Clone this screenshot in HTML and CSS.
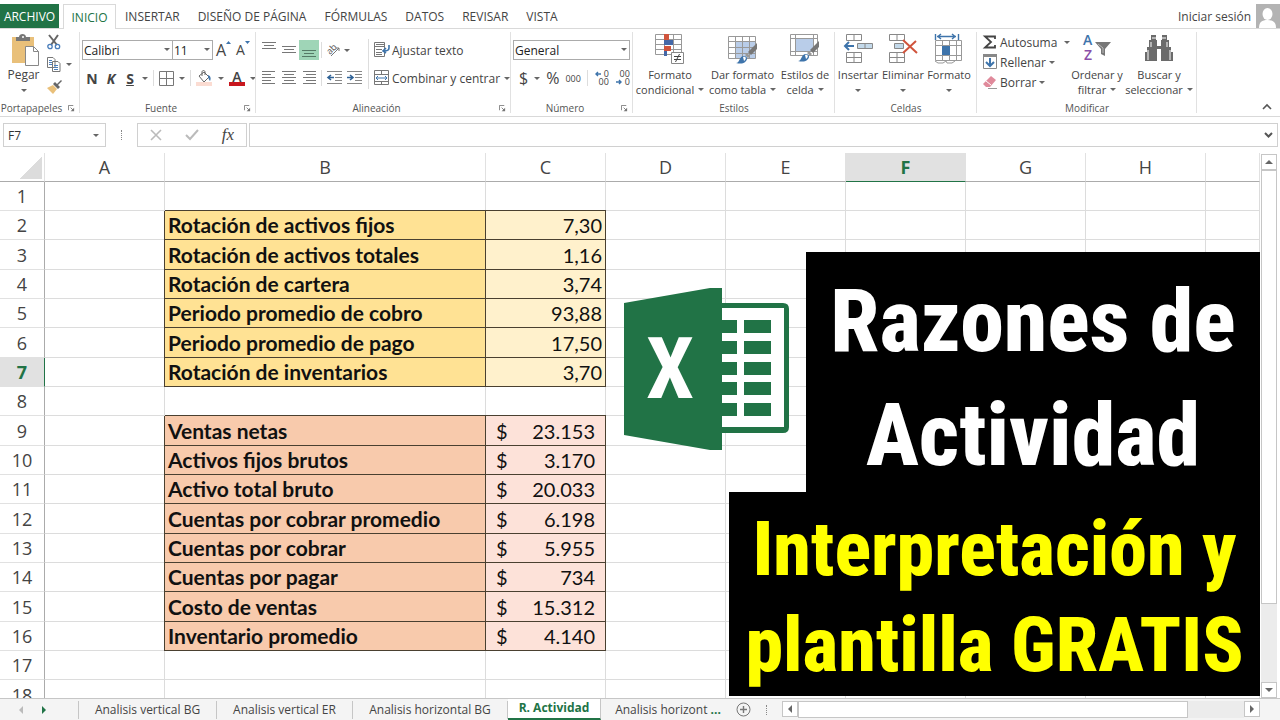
FILE: index.html
```html
<!DOCTYPE html>
<html lang="es">
<head>
    <meta charset="UTF-8">
    <meta name="viewport" content="width=device-width, initial-scale=1.0">
    <title>Razones de Actividad</title>
    <link rel="stylesheet" href="styles.css">
</head>
<body>
    <svg class="defs" aria-hidden="true">
        <symbol id="launcher" viewBox="0 0 8 8">
            <path d="M.5 6V.5H6M3 3l3 3" fill="none" stroke="#777"/>
            <path d="M7 3v4H3z" fill="#777"/>
        </symbol>
        <symbol id="brush" viewBox="0 0 22 22">
            <path d="M21 0v6l-6 6-3-3z" fill="#777"/>
            <path d="M11 10l3 3-2 2-3-3z" fill="#999"/>
            <path d="M0 20c4 0 3-7 8-7 3 0 4 3 2 5-2 3-6 3-10 2z" fill="#3e74ab"/>
            <path d="M7 14c3-1 4 2 1 4z" fill="#fff"/>
        </symbol>
    </svg>

    <div class="app">
        <!-- Pestañas -->
        <header class="tabs">
            <button class="tab file">ARCHIVO</button>
            <button class="tab active">INICIO</button>
            <button class="tab">INSERTAR</button>
            <button class="tab">DISEÑO DE PÁGINA</button>
            <button class="tab">FÓRMULAS</button>
            <button class="tab">DATOS</button>
            <button class="tab">REVISAR</button>
            <button class="tab">VISTA</button>
            <a class="login" href="#">Iniciar sesión
                <svg width="24" height="24" viewBox="0 0 24 24"><path d="M0 0h24v24H0z" fill="#b3b3b3"/><ellipse cx="11.5" cy="10" rx="5" ry="6" fill="#fff"/><path d="M3 24c0-6 3-8 8.500-8s8.500 2 8.500 8z" fill="#fff"/></svg>
            </a>
        </header>

        <!-- Cinta de opciones -->
        <div class="ribbon">
            <section class="group clipboard">
                <div class="group-body">
                    <button class="big paste">
                        <svg width="30" height="32" viewBox="0 0 30 32"><path d="M3 3h22v26H3z" fill="#e9c07a"/><path d="M7 7V3h3c0-4 7-4 7 0h4v4z" fill="#777"/><circle cx="14" cy="3" r="1" fill="#fff"/><path d="M16.500 12.500h8l5 5v14h-13z" fill="#fff" stroke="#888"/><path d="M24.500 12.500v5h5" fill="none" stroke="#888"/></svg>
                        <span>Pegar</span><i class="caret"></i>
                    </button>
                    <div class="small-col">
                        <button class="icon-btn" aria-label="Cortar"><svg width="14" height="15" viewBox="0 0 14 15"><path d="M2 0l8 10M11 0L4 10" stroke="#666" stroke-width="2" fill="none"/><circle cx="3" cy="11.500" r="2.200" fill="none" stroke="#4a7ebb" stroke-width="1.300"/><circle cx="10.500" cy="11.500" r="2.200" fill="none" stroke="#4a7ebb" stroke-width="1.300"/></svg></button>
                        <button class="icon-btn" aria-label="Copiar"><svg width="14" height="15" viewBox="0 0 14 15"><path d="M.5.5H6l2 2v8H.500zM5.500 4.500H11l2 2v8H5.500z" fill="#fff" stroke="#777"/><path d="M2 3.500h3M2 5.500h3M2 7.500h3M7 8.500h4M7 10.500h4M7 12.500h4" stroke="#4a7ebb"/></svg><i class="caret"></i></button>
                        <button class="icon-btn" aria-label="Copiar formato"><svg width="15" height="14" viewBox="0 0 15 14"><path d="M0 8l6-3 4 4-4 5z" fill="#e9c07a"/><path d="M6 4l2-2 2 2 4-4 1 1-4 4 2 2-2 2z" fill="#666"/></svg></button>
                    </div>
                </div>
                <h2>Portapapeles</h2>
                <svg class="launcher"><use href="#launcher"/></svg>
            </section>

            <section class="group font">
                <div class="group-body rows">
                    <div class="row">
                        <span class="drop family"><select aria-label="Fuente"><option>Calibri</option></select></span><span class="drop size"><select aria-label="Tamaño"><option>11</option></select></span>
                        <button class="grow" aria-label="Aumentar"><b>A</b><svg width="5" height="3"><path d="M0 3l2.500-3L5 3z" fill="#3e74ab"/></svg></button>
                        <button class="grow less" aria-label="Disminuir"><b>A</b><svg width="5" height="3"><path d="M0 0h5L2.500 3z" fill="#3e74ab"/></svg></button>
                    </div>
                    <div class="row format">
                        <button class="letter">N</button>
                        <button class="letter italic">K</button>
                        <button class="letter under">S</button>
                        <i class="caret"></i><i class="bar"></i>
                        <button class="pic" aria-label="Bordes"><svg width="15" height="15" viewBox="0 0 15 15"><path d="M.5.5h14v14H.500zM7.500 1v13M1 7.500h13" fill="none" stroke="#777"/></svg></button>
                        <i class="caret"></i><i class="bar"></i>
                        <button class="pic" aria-label="Relleno"><svg width="17" height="16" viewBox="0 0 17 16"><path d="M3 6l5-4 5 5-5 5z" fill="#fff" stroke="#666"/><path d="M6 6V2c0-2 3-2 3 0v3" fill="none" stroke="#666"/><path d="M12 5c3 1 3 4 2 6-1-1-2-3-2-6z" fill="#3e74ab"/><path d="M0 12h16v4H0z" fill="#fbdcd2"/></svg></button>
                        <i class="caret"></i>
                        <button class="font-color">A</button>
                        <i class="caret"></i>
                    </div>
                </div>
                <h2>Fuente</h2>
                <svg class="launcher"><use href="#launcher"/></svg>
            </section>

            <section class="group align">
                <div class="group-body">
                    <div class="rows align-icons">
                        <div class="row">
                            <button class="al" aria-label="Arriba"><svg width="14" height="18" viewBox="0 0 14 18"><path d="M0 1.500h14M2 4.500h10M0 7.500h14" stroke="#777"/></svg></button>
                            <button class="al" aria-label="Medio"><svg width="14" height="18" viewBox="0 0 14 18"><path d="M0 5.500h14M2 8.500h10M0 11.500h14" stroke="#777"/></svg></button>
                            <button class="al on" aria-label="Abajo"><svg width="14" height="18" viewBox="0 0 14 18"><path d="M0 9.500h14M2 12.500h10M0 15.500h14" stroke="#557a66"/></svg></button>
                            <i class="bar"></i>
                            <button class="al" aria-label="Orientación"><svg width="14" height="14" viewBox="0 0 14 14"><text x="0" y="9" transform="rotate(-45 5 7)" class="ab">ab</text><path d="M4 13l8-8M9 5h3v3" fill="none" stroke="#777"/></svg></button>
                            <i class="caret"></i>
                        </div>
                        <div class="row">
                            <button class="al" aria-label="Izquierda"><svg width="14" height="16" viewBox="0 0 14 16"><path d="M0 1.500h13M0 4.500h9M0 7.500h13M0 10.500h9M0 13.500h13" stroke="#777"/></svg></button>
                            <button class="al" aria-label="Centro"><svg width="14" height="16" viewBox="0 0 14 16"><path d="M0 1.500h14M2 4.500h10M0 7.500h14M2 10.500h10M0 13.500h14" stroke="#777"/></svg></button>
                            <button class="al" aria-label="Derecha"><svg width="14" height="16" viewBox="0 0 14 16"><path d="M1 1.500h13M4 4.500h10M1 7.500h13M4 10.500h10M1 13.500h13" stroke="#777"/></svg></button>
                            <i class="bar"></i>
                            <button class="al" aria-label="Disminuir sangría"><svg width="15" height="16" viewBox="0 0 15 16"><path d="M0 1.500h15M8 4.500h7M8 7.500h7M8 10.500h7M0 13.500h15" stroke="#888"/><path d="M7 7.500H1M4 5L1 7.500 4 10" fill="none" stroke="#2f6296" stroke-width="1.600"/></svg></button>
                            <button class="al" aria-label="Aumentar sangría"><svg width="15" height="16" viewBox="0 0 15 16"><path d="M0 1.500h15M8 4.500h7M8 7.500h7M8 10.500h7M0 13.500h15" stroke="#888"/><path d="M0 7.500h6M3 5l3 2.500L3 10" fill="none" stroke="#2f6296" stroke-width="1.600"/></svg></button>
                        </div>
                    </div>
                    <i class="bar tall"></i>
                    <div class="rows wraps">
                        <button class="row"><svg width="16" height="16" viewBox="0 0 16 16"><path d="M.5.5h10v14H.500zM0 4.500h11M2 7.500h6M2 10.500h6M2 12.500h6M2 2.500h9" fill="none" stroke="#777"/><path d="M15 3v3c0 2-2 3-5 3M12 6L9 9l3 2" fill="none" stroke="#3e74ab" stroke-width="1.600"/></svg>Ajustar texto</button>
                        <button class="row"><svg width="16" height="16" viewBox="0 0 16 16"><path d="M.5.5h14v14H.500zM0 4.500h15M0 11.500h15M7.500 0v4M7.500 12v3" fill="none" stroke="#777"/><path d="M2 8h11M4 6L2 8l2 2M11 6l2 2-2 2" fill="none" stroke="#3e74ab"/></svg>Combinar y centrar<i class="caret"></i></button>
                    </div>
                </div>
                <h2>Alineación</h2>
                <svg class="launcher"><use href="#launcher"/></svg>
            </section>

            <section class="group number">
                <div class="group-body rows">
                    <div class="row"><span class="drop general"><select aria-label="Formato de número"><option>General</option></select></span></div>
                    <div class="row symbols">
                        <button class="symbol">$</button><i class="caret"></i>
                        <button class="symbol">%</button>
                        <button class="zeros">000</button>
                        <i class="bar"></i>
                        <button class="decimals" aria-label="Aumentar decimales"><span><svg width="6" height="6" viewBox="0 0 6 6"><path d="M6 3H1M3 1L1 3l2 2" fill="none" stroke="#3e74ab" stroke-width="1.400"/></svg> 0</span><span>00</span></button>
                        <button class="decimals" aria-label="Disminuir decimales"><span>00</span><span><svg width="6" height="6" viewBox="0 0 6 6"><path d="M0 3h5M3 1l2 2-2 2" fill="none" stroke="#3e74ab" stroke-width="1.400"/></svg> 0</span></button>
                    </div>
                </div>
                <h2>Número</h2>
                <svg class="launcher"><use href="#launcher"/></svg>
            </section>

            <section class="group styles">
                <div class="group-body">
                    <button class="big conditional">
                        <svg width="30" height="32" viewBox="0 0 30 32"><path d="M.5.500h26v20H.500zM0 5.500h27M0 10.500h27M0 15.500h27M9.500 0v21M18.500 0v21" fill="#fff" stroke="#999"/><path d="M9 0h5v6H9zM9 12h7v5H9z" fill="#d0543c"/><path d="M9 6h9v5H9zM9 17h3v5H9z" fill="#4468a8"/><path d="M16.500 18.500h12v11h-12z" fill="#fff" stroke="#888"/><path d="M19 22.500h7M19 25.500h7M24.500 20l-4 8" stroke="#444"/></svg>
                        <span>Formato</span><span>condicional<i class="caret"></i></span>
                    </button>
                    <button class="big table-style">
                        <svg width="30" height="32" viewBox="0 0 30 32"><path d="M.5 2.500h27v22H.500z" fill="#fff"/><path d="M7 8h20v16H7z" fill="#b9cde9"/><path d="M.5 2.500h27v22H.500zM0 7.500h27M0 13.500h27M0 19.500h27M7.500 2v22M14.500 2v22M21.500 2v22" fill="none" stroke="#999"/><use href="#brush" x="8" y="9" width="22" height="22"/></svg>
                        <span>Dar formato</span><span>como tabla<i class="caret"></i></span>
                    </button>
                    <button class="big cell-style">
                        <svg width="30" height="32" viewBox="0 0 30 32"><path d="M.5.500h27v21H.500z" fill="#fff"/><path d="M5 5h18v12H5z" fill="#b9cde9"/><path d="M.5.500h27v21H.500zM0 4.500h27M0 17.500h27M5.500 0v21M23.500 0v21" fill="none" stroke="#999"/><use href="#brush" x="8" y="7" width="22" height="22"/></svg>
                        <span>Estilos de</span><span>celda<i class="caret"></i></span>
                    </button>
                </div>
                <h2>Estilos</h2>
            </section>

            <section class="group cells">
                <div class="group-body">
                    <button class="big insert">
                        <svg width="30" height="32" viewBox="0 0 30 32"><path d="M3.500.500h15v6h-15zM11 0v6M3.500 18.500h15v10h-15zM3 23.500h15M11 18v10" fill="#fff" stroke="#888"/><path d="M14.500 9.500h15v5h-15zM22 9v6" fill="#c3d9ea" stroke="#888"/><path d="M11 12H2M6 8l-4 4 4 4" fill="none" stroke="#3e74ab" stroke-width="2"/></svg>
                        <span>Insertar</span><i class="caret"></i>
                    </button>
                    <button class="big delete">
                        <svg width="30" height="32" viewBox="0 0 30 32"><path d="M1.500.500h15v6h-15zM9 0v6M1.500 18.500h15v10h-15zM1 23.500h15M9 18v10" fill="#fff" stroke="#888"/><path d="M6.500 9.500h9v5h-9z" fill="#c3d9ea" stroke="#888"/><path d="M15 6l14 13M28 7L15 19" stroke="#d0543c" stroke-width="2"/></svg>
                        <span>Eliminar</span><i class="caret"></i>
                    </button>
                    <button class="big format-cells">
                        <svg width="30" height="32" viewBox="0 0 30 32"><path d="M1.500 6.500h26v20h-26zM1 11.500h26M1 21.500h26M8.500 6v20M15.500 6v20M22.500 6v20" fill="#fff" stroke="#999"/><path d="M1 27l3 2h5l3-2 1 2h5l3-2" fill="none" stroke="#999"/><path d="M8 12h8v9H8z" fill="#3e74ab"/><path d="M3 2.500h19M7 0L4 2.500 7 5M18 0l3 2.500L18 5M1.500 0v6M24.500 0v6" fill="none" stroke="#3e74ab" stroke-width="1.400"/></svg>
                        <span>Formato</span><i class="caret"></i>
                    </button>
                </div>
                <h2>Celdas</h2>
            </section>

            <section class="group edit">
                <div class="group-body">
                    <div class="edit-list">
                        <button><svg width="14" height="14" viewBox="0 0 14 14"><path d="M12 4V1.500H2L8 7l-6 5.500h10V10" fill="none" stroke="#444" stroke-width="1.800"/></svg>Autosuma<i class="caret wide"></i></button>
                        <button><svg width="14" height="16" viewBox="0 0 14 16"><path d="M.5.500h13v14H.500z" fill="#fff" stroke="#888"/><path d="M0 0h14v3H0z" fill="#888"/><path d="M7 4v8M3 8l4 4 4-4" fill="none" stroke="#3e74ab" stroke-width="2"/></svg>Rellenar<i class="caret"></i></button>
                        <button><svg width="14" height="14" viewBox="0 0 14 14"><path d="M8 1l5 4-6 7H3L0 9z" fill="#e08a9b"/><path d="M3 6l5 4" stroke="#fff"/><path d="M5 13.500h9" stroke="#999"/></svg>Borrar<i class="caret"></i></button>
                    </div>
                    <button class="big sort">
                        <svg width="30" height="32" viewBox="0 0 30 32"><text x="1" y="11" class="az a">A</text><text x="2" y="26" class="az z">Z</text><path d="M13 8h16l-6 7v7l-4-2v-5z" fill="#777"/><path d="M16 10l5 4v5" fill="none" stroke="#bbb"/></svg>
                        <span>Ordenar y</span><span>filtrar<i class="caret"></i></span>
                    </button>
                    <button class="big find">
                        <svg width="30" height="32" viewBox="0 0 30 32"><path d="M7 1h5v5h1v6h4V6h1V1h5v5h2v7h2v5h2v9H17V15h-4v12H1v-9h2v-5h2V6h2z" fill="#6b6b6b"/><path d="M4 16v10M7 8v5M26 16v10M23 8v5M8 4h4M18 4h4" stroke="#fff"/></svg>
                        <span>Buscar y</span><span>seleccionar<i class="caret"></i></span>
                    </button>
                </div>
                <h2>Modificar</h2>
            </section>

            <button class="collapse" aria-label="Contraer"><svg width="10" height="6" viewBox="0 0 10 6"><path d="M1 5l4-4 4 4" fill="none" stroke="#555" stroke-width="1.600"/></svg></button>
        </div>

        <!-- Barra de fórmulas -->
        <div class="formula-bar">
            <label class="name-box"><input type="text" value="F7" aria-label="Cuadro de nombres"><i class="caret"></i></label>
            <i class="dots"></i>
            <div class="fx-box">
                <button aria-label="Cancelar"><svg width="12" height="12" viewBox="0 0 12 12"><path d="M1 1l10 10M11 1L1 11" stroke="#bbb" stroke-width="1.600"/></svg></button>
                <button aria-label="Introducir"><svg width="14" height="12" viewBox="0 0 14 12"><path d="M1 6l4 4 8-9" fill="none" stroke="#bbb" stroke-width="2"/></svg></button>
                <button class="fx">fx</button>
            </div>
            <div class="formula">
                <input type="text" aria-label="Fórmula">
                <svg width="9" height="6" viewBox="0 0 9 6"><path d="M1 1l3.500 3.500L8 1" fill="none" stroke="#555" stroke-width="2"/></svg>
            </div>
        </div>

        <!-- Hoja -->
        <main class="sheet">
            <div class="grid">
                <table>
                    <colgroup><col class="c-num"><col class="c"><col class="c-b"><col class="c"><col class="c"><col class="c"><col class="c"><col class="c"><col class="c"><col></colgroup>
                    <thead>
                        <tr><th class="corner"></th><th>A</th><th>B</th><th>C</th><th>D</th><th>E</th><th class="sel">F</th><th>G</th><th>H</th><th></th></tr>
                    </thead>
                    <tbody>
                        <tr><th>1</th><td></td><td></td><td></td><td></td><td></td><td></td><td></td><td></td><td></td></tr>
                        <tr class="yellow"><th>2</th><td></td><td class="name">Rotación de activos fijos</td><td class="val">7,30</td><td></td><td></td><td></td><td></td><td></td><td></td></tr>
                        <tr class="yellow"><th>3</th><td></td><td class="name">Rotación de activos totales</td><td class="val">1,16</td><td></td><td></td><td></td><td></td><td></td><td></td></tr>
                        <tr class="yellow"><th>4</th><td></td><td class="name">Rotación de cartera</td><td class="val">3,74</td><td></td><td></td><td></td><td></td><td></td><td></td></tr>
                        <tr class="yellow"><th>5</th><td></td><td class="name">Periodo promedio de cobro</td><td class="val">93,88</td><td></td><td></td><td></td><td></td><td></td><td></td></tr>
                        <tr class="yellow"><th>6</th><td></td><td class="name">Periodo promedio de pago</td><td class="val">17,50</td><td></td><td></td><td></td><td></td><td></td><td></td></tr>
                        <tr class="yellow"><th class="sel">7</th><td></td><td class="name">Rotación de inventarios</td><td class="val">3,70</td><td></td><td></td><td></td><td></td><td></td><td></td></tr>
                        <tr><th>8</th><td></td><td></td><td></td><td></td><td></td><td></td><td></td><td></td><td></td></tr>
                        <tr class="orange"><th>9</th><td></td><td class="name">Ventas netas</td><td class="val"><div class="money"><span>$</span><span>23.153</span></div></td><td></td><td></td><td></td><td></td><td></td><td></td></tr>
                        <tr class="orange"><th>10</th><td></td><td class="name">Activos fijos brutos</td><td class="val"><div class="money"><span>$</span><span>3.170</span></div></td><td></td><td></td><td></td><td></td><td></td><td></td></tr>
                        <tr class="orange"><th>11</th><td></td><td class="name">Activo total bruto</td><td class="val"><div class="money"><span>$</span><span>20.033</span></div></td><td></td><td></td><td></td><td></td><td></td><td></td></tr>
                        <tr class="orange"><th>12</th><td></td><td class="name">Cuentas por cobrar promedio</td><td class="val"><div class="money"><span>$</span><span>6.198</span></div></td><td></td><td></td><td></td><td></td><td></td><td></td></tr>
                        <tr class="orange"><th>13</th><td></td><td class="name">Cuentas por cobrar</td><td class="val"><div class="money"><span>$</span><span>5.955</span></div></td><td></td><td></td><td></td><td></td><td></td><td></td></tr>
                        <tr class="orange"><th>14</th><td></td><td class="name">Cuentas por pagar</td><td class="val"><div class="money"><span>$</span><span>734</span></div></td><td></td><td></td><td></td><td></td><td></td><td></td></tr>
                        <tr class="orange"><th>15</th><td></td><td class="name">Costo de ventas</td><td class="val"><div class="money"><span>$</span><span>15.312</span></div></td><td></td><td></td><td></td><td></td><td></td><td></td></tr>
                        <tr class="orange"><th>16</th><td></td><td class="name">Inventario promedio</td><td class="val"><div class="money"><span>$</span><span>4.140</span></div></td><td></td><td></td><td></td><td></td><td></td><td></td></tr>
                        <tr><th>17</th><td></td><td></td><td></td><td></td><td></td><td></td><td></td><td></td><td></td></tr>
                        <tr><th>18</th><td></td><td></td><td></td><td></td><td></td><td></td><td></td><td></td><td></td></tr>
                    </tbody>
                </table>
            </div>
            <div class="vscroll">
                <button aria-label="Subir"><i class="arrow up"></i></button>
                <div class="vthumb"></div>
                <div class="track"></div>
                <button aria-label="Bajar"><i class="arrow down"></i></button>
            </div>

            <svg class="logo" width="166" height="164" viewBox="0 0 166 164">
                <path d="M90 15h69q6 0 6 6v118q0 6-6 6H90z" fill="#217346"/>
                <path d="M90 20h70v119H90z" fill="#fff"/>
                <path d="M90 32h23v13H90zM120 32h27v13h-27zM90 53h23v13H90zM120 53h27v13h-27zM90 74h23v13H90zM120 74h27v13h-27zM90 94h23v13H90zM120 94h27v13h-27zM90 115h23v13H90zM120 115h27v13h-27z" fill="#217346"/>
                <path d="M0 15L86 0h12v162H86L0 147z" fill="#217346"/>
                <text x="46" y="110" class="logo-x">X</text>
            </svg>

            <div class="banner">
                <h1>Razones de<br>Actividad</h1>
                <p>Interpretación y<br>plantilla GRATIS</p>
            </div>
        </main>

        <!-- Pestañas de hojas -->
        <footer class="bottom">
            <div class="nav"><i class="arrow left off"></i><i class="arrow right go"></i></div>
            <button class="sheet-tab bg">Analisis vertical BG</button>
            <button class="sheet-tab er">Analisis vertical ER</button>
            <button class="sheet-tab hbg">Analisis horizontal BG</button>
            <button class="sheet-tab current">R. Actividad</button>
            <button class="sheet-tab cut">Analisis horizont <b>...</b></button>
            <button class="add" aria-label="Hoja nueva"><svg width="15" height="15" viewBox="0 0 15 15"><circle cx="7.500" cy="7.500" r="6.500" fill="none" stroke="#777"/><path d="M7.500 4v7M4 7.500h7" stroke="#777" stroke-width="1.400"/></svg></button>
            <i class="dots"></i>
            <div class="hscroll">
                <button aria-label="Izquierda"><i class="arrow left"></i></button>
                <div class="hthumb"></div>
                <div class="track"></div>
                <button aria-label="Derecha"><i class="arrow right"></i></button>
            </div>
        </footer>
    </div>
</body>
</html>
```
FILE: styles.css
```css
* {
    box-sizing: border-box;
}
body {
    margin: 0;
    font-family: "Open Sans", "Noto Sans", sans-serif;
    font-size: 12px;
    color: #444;
    background: #fff;
}
button {
    border: none;
    background: none;
    padding: 0;
    margin: 0;
    font: inherit;
    color: inherit;
    cursor: pointer;
}
svg {
    flex: none;
    display: block;
    overflow: visible;
}
.defs {
    display: none;
}
.app {
    height: 100vh;
    display: flex;
    flex-direction: column;
    overflow: hidden;
}

/* tabs */
.tabs {
    height: 29px;
    padding-top: 4px;
    display: flex;
    border-bottom: 1px solid #d9d9d9;
}
.tab {
    padding: 0 9px;
    white-space: nowrap;
    line-height: 25px;
}
.tab.file {
    width: 59px;
    padding: 0;
    background: #217346;
    color: #fff;
    margin-right: 4px;
}
.tab.active {
    width: 53px;
    height: 25px;
    padding: 0;
    border: 1px solid #d9d9d9;
    border-bottom: none;
    background: #fff;
    color: #217346;
}
.login {
    margin-left: auto;
    display: flex;
    align-items: center;
    gap: 5px;
    color: #444;
    text-decoration: none;
}

/* ribbon */
.ribbon {
    height: 88px;
    display: flex;
    position: relative;
    border-bottom: 1px solid #d9d9d9;
}
.group {
    flex: none;
    display: flex;
    flex-direction: column;
    position: relative;
    padding-top: 3px;
}
.group::after {
    content: "";
    position: absolute;
    right: 0;
    top: 3px;
    bottom: 3px;
    width: 1px;
    background: #e1e1e1;
}
.group h2 {
    margin: 0;
    font-size: 10px;
    font-weight: normal;
    line-height: 16px;
    text-align: center;
    color: #555;
}
.group-body {
    height: 68px;
    display: flex;
}
.clipboard { width: 80px; }
.font { width: 176px; }
.align { width: 255px; }
.number { width: 122px; }
.styles { width: 202px; }
.cells { width: 142px; }
.edit { width: 220px; }
.clipboard h2 { padding-right: 17px; }
.font h2, .align h2, .number h2 { padding-right: 14px; }
.launcher {
    position: absolute;
    right: 5px;
    bottom: 4px;
    width: 7px;
    height: 7px;
}
.caret {
    flex: none;
    display: inline-block;
    border: 3px solid transparent;
    border-top-color: #666;
    border-bottom: none;
}
.bar {
    flex: none;
    width: 1px;
    height: 16px;
    background: #ddd;
}
.tall {
    height: 50px;
    margin-top: 7px;
}
.big {
    display: flex;
    flex-direction: column;
    align-items: center;
    font-size: 11px;
    line-height: 15px;
    padding-top: 2px;
    white-space: nowrap;
}
.big svg {
    margin-bottom: 1px;
}
.big > .caret {
    margin-top: 7px;
}
.big span .caret {
    margin-left: 4px;
    vertical-align: 3px;
}
.paste {
    width: 47px;
    font-size: 12px;
}
.conditional { width: 74px; }
.table-style { width: 71px; }
.cell-style { width: 54px; }
.insert { width: 46px; }
.delete { width: 44px; }
.format-cells { width: 48px; }
.sort { width: 60px; }
.find { width: 64px; }
.small-col {
    display: flex;
    flex-direction: column;
    gap: 7px;
    padding-top: 3px;
}
.icon-btn {
    display: flex;
    align-items: center;
    gap: 5px;
    height: 15px;
}
.rows {
    display: flex;
    flex-direction: column;
    gap: 8px;
    padding-top: 8px;
}
.row {
    display: flex;
    align-items: center;
    height: 20px;
}
.drop {
    position: relative;
    height: 20px;
}
.drop::after {
    content: "";
    position: absolute;
    right: 3px;
    top: 8px;
    border: 3px solid transparent;
    border-top-color: #666;
    border-bottom: none;
}
.drop select {
    appearance: none;
    width: 100%;
    height: 20px;
    padding: 0 1px;
    border: 1px solid #ababab;
    border-radius: 0;
    background: #fff;
    font: inherit;
    color: #222;
}
.family {
    width: 91px;
    margin: 0 -1px 0 2px;
}
.size { width: 41px; }
.general {
    width: 117px;
    margin-left: 2px;
}
.grow {
    display: flex;
    align-items: flex-start;
    width: 14px;
    margin-left: 3px;
    font-size: 16px;
    line-height: 18px;
}
.grow b {
    font-weight: 500;
}
.grow.less {
    margin-left: 6px;
    font-size: 14px;
}
.format {
    gap: 5px;
    padding-left: 5px;
}
.letter {
    width: 14px;
    font-size: 14px;
    font-weight: bold;
}
.italic { font-style: italic; }
.under { text-decoration: underline; }
.font-color {
    width: 16px;
    height: 16px;
    font-size: 14px;
    font-weight: 600;
    line-height: 13px;
    border-bottom: 4px solid #c8171e;
}
.align-icons .row {
    padding-left: 3px;
}
.al {
    width: 20px;
    height: 20px;
    display: flex;
    align-items: center;
    justify-content: center;
}
.al.on {
    background: #9fd5b7;
}
.align-icons .bar {
    margin: 0 2px;
}
.ab {
    font-size: 9px;
    fill: #555;
}
.align-icons {
    width: 112px;
}
.wraps .row {
    gap: 2px;
    padding-left: 5px;
    white-space: nowrap;
}
.wraps .caret {
    margin-left: 2px;
}
.symbols {
    padding-left: 8px;
    gap: 6px;
}
.symbol {
    font-size: 16px;
}
.zeros {
    font-size: 9px;
}
.decimals {
    display: flex;
    flex-direction: column;
    align-items: flex-end;
    width: 15px;
    font-size: 9px;
    line-height: 8px;
}
.decimals span {
    display: flex;
    align-items: center;
    gap: 3px;
}
.edit-list {
    display: flex;
    flex-direction: column;
    width: 90px;
    padding-left: 6px;
}
.edit-list button {
    display: flex;
    align-items: center;
    gap: 3px;
    height: 20px;
}
.edit-list .wide {
    margin-left: 4px;
}
.az {
    font-size: 14px;
    font-weight: 600;
}
.az.a { fill: #3e74ab; }
.az.z { fill: #8a4fa8; }
.collapse {
    margin: auto 8px 6px auto;
}

/* formula bar */
.formula-bar {
    height: 36px;
    padding: 6px 2px 6px 3px;
    display: flex;
    align-items: stretch;
}
.name-box {
    width: 103px;
    display: flex;
    align-items: center;
    border: 1px solid #d0d0d0;
    padding-right: 6px;
}
.formula-bar input {
    flex: 1;
    min-width: 0;
    border: none;
    padding: 0 4px;
    font: inherit;
    color: #333;
    outline: none;
}
.dots {
    width: 1px;
    height: 10px;
    margin: auto 15px;
    border-left: 1px dotted #888;
}
.fx-box {
    width: 110px;
    display: flex;
    align-items: center;
    justify-content: space-between;
    border: 1px solid #d0d0d0;
    padding: 0 12px;
}
.fx {
    font-family: "Liberation Serif", serif;
    font-style: italic;
    font-size: 17px;
    line-height: 20px;
}
.formula {
    flex: 1;
    display: flex;
    align-items: center;
    margin-left: 2px;
    border: 1px solid #d0d0d0;
    padding-right: 4px;
}

/* sheet */
.sheet {
    flex: 1;
    min-height: 0;
    display: flex;
    position: relative;
}
.grid {
    flex: 1;
    min-width: 0;
    overflow: hidden;
}
table {
    width: 100%;
    table-layout: fixed;
    border-collapse: separate;
    border-spacing: 0;
}
.c-num { width: 45px; }
.c { width: 120px; }
.c-b { width: 321px; }
th {
    padding: 0;
    font-size: 18px;
    font-weight: normal;
    line-height: 24px;
    text-align: center;
    border-right: 1px solid #e1e1e1;
    border-bottom: 1px solid #e1e1e1;
}
thead th {
    height: 29px;
    border-bottom-color: #ababab;
}
tbody th {
    height: 29px;
    border-right-color: #ababab;
}
td {
    padding: 0;
    border-right: 1px solid #dcdcdc;
    border-bottom: 1px solid #dcdcdc;
    font-family: Lato, sans-serif;
    font-size: 20px;
    line-height: 26px;
    color: #111;
    white-space: nowrap;
}
tbody tr:nth-child(3n) th {
    height: 30px;
}
.corner {
    background: linear-gradient(135deg, transparent 50%, #dcdcdc 50%) 19px 4px / 23px 22px no-repeat;
}
th.sel {
    background: #e1e1e1;
    color: #217346;
    font-weight: bold;
}
thead th.sel {
    border-bottom-color: #217346;
}
tbody th.sel {
    border-right-color: #217346;
}
.name, .val {
    border-color: #4a4030;
    box-shadow: -1px 0 #4a4030, 0 -1px #4a4030;
}
.name {
    padding-left: 3px;
    font-size: 21px;
    font-weight: bold;
}
.val {
    padding-right: 3px;
    text-align: right;
}
.yellow .name { background: #ffe294; }
.yellow .val { background: #fff1cc; }
.orange .name { background: #f8caac; }
.orange .val { background: #fde2d9; }
.money {
    display: flex;
    justify-content: space-between;
    padding: 0 7px 0 10px;
}
.vscroll {
    width: 20px;
    display: flex;
    flex-direction: column;
    padding: 1px 3px 0 1px;
}
.vscroll button, .hscroll button {
    flex: none;
    width: 16px;
    height: 16px;
    display: flex;
    align-items: center;
    justify-content: center;
    border: 1px solid #c6c6c6;
    background: #fff;
}
.vthumb {
    flex: 435;
    border: 1px solid #c6c6c6;
    background: #fff;
}
.vscroll .track {
    flex: 78;
}
.track {
    background: #ececec;
}
.arrow {
    border: 4px solid transparent;
}
.up { border-top: none; border-bottom-color: #666; }
.down { border-bottom: none; border-top-color: #666; }
.left { border-left: none; border-right-color: #666; }
.right { border-right: none; border-left-color: #666; }

/* artwork over the sheet */
.logo {
    position: absolute;
    left: 624px;
    top: 135px;
}
.logo-x {
    font-family: "Roboto Condensed", Roboto, sans-serif;
    font-size: 86px;
    font-weight: bold;
    text-anchor: middle;
    fill: #fff;
}
.banner {
    position: absolute;
    right: 20px;
    bottom: 2px;
    display: flex;
    flex-direction: column;
    align-items: flex-end;
    font-family: "Roboto Condensed", Roboto, sans-serif;
    font-weight: 800;
    text-align: center;
    white-space: nowrap;
}
.banner h1, .banner p {
    margin: 0;
    font-weight: inherit;
    background: #000;
}
.banner h1 {
    width: 454px;
    height: 240px;
    padding: 12px 0;
    font-size: 88px;
    line-height: 114px;
    color: #fff;
}
.banner p {
    width: 531px;
    height: 204px;
    padding: 9px 0;
    font-size: 76px;
    line-height: 96px;
    color: #ff0;
}

/* sheet tabs */
.bottom {
    height: 22px;
    display: flex;
    align-items: center;
    border-top: 1px solid #c6c6c6;
    background: #f4f4f4;
}
.nav {
    width: 79px;
    height: 18px;
    display: flex;
    align-items: center;
    gap: 19px;
    padding-left: 19px;
    border-right: 1px solid #c6c6c6;
}
.off { border-right-color: #bbb; }
.go { border-left-color: #217346; }
.sheet-tab {
    height: 18px;
    line-height: 16px;
    white-space: nowrap;
    border-right: 1px solid #c6c6c6;
}
.bg { width: 138px; }
.er { width: 136px; }
.hbg { width: 155px; }
.current {
    width: 93px;
    height: 21px;
    margin-top: -1px;
    background: #fff;
    color: #217346;
    font-weight: bold;
    border-bottom: 2px solid #217346;
}
.cut {
    width: 134px;
    border: none;
}
.cut b { color: #217346; }
.add {
    margin-left: 1px;
}
.hscroll {
    flex: 1;
    height: 17px;
    margin-right: 20px;
    display: flex;
}
.hthumb {
    flex: 392;
    border: 1px solid #c6c6c6;
    background: #fff;
}
.hscroll .track {
    flex: 57;
}
```
